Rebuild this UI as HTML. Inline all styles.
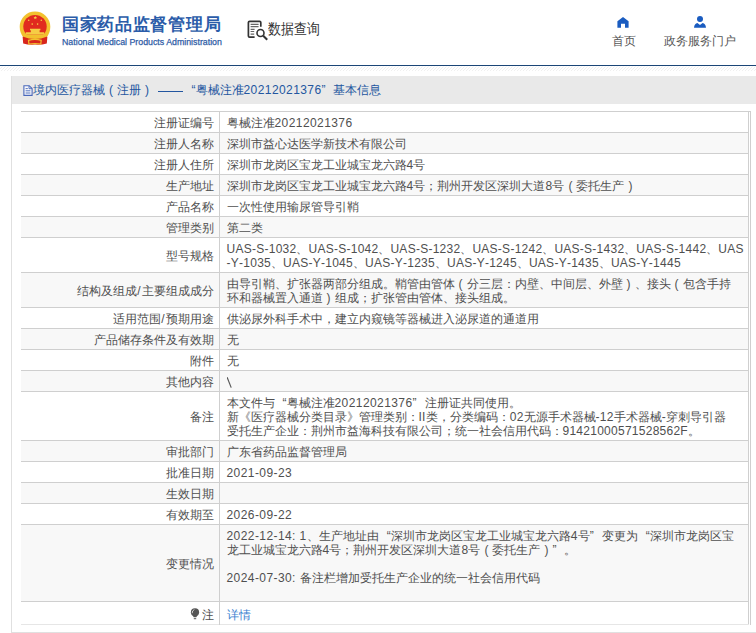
<!DOCTYPE html>
<html><head><meta charset="utf-8">
<style>
*{margin:0;padding:0;box-sizing:border-box}
html,body{width:756px;height:633px;overflow:hidden;background:#fff;font-family:"Liberation Sans",sans-serif;color:#333}
.a{position:absolute;white-space:nowrap}
.t1{left:62px;top:13px;font-size:17px;letter-spacing:0.7px;font-weight:900;color:#2b5ca9;line-height:24px}
.t2{left:62px;top:36.6px;font-size:8.8px;color:#2f5ca6;-webkit-text-stroke:0.25px #2f5ca6;line-height:10px}
.sqt{left:268px;top:19px;font-size:13px;color:#333;line-height:18px;transform:scaleY(1.16);transform-origin:0 0}
.nav{top:34px;font-size:12px;color:#555;line-height:14px}
.line{left:0;top:65px;width:756px;height:1px;background:#1b4677}
.hatch{left:0;top:66px;width:756px;height:6px;background:repeating-linear-gradient(135deg,#fff 0,#fff 2px,#ececec 2px,#ececec 3px)}
.box{left:11px;top:76px;width:760px;height:557px;border-left:1px solid #e0e0e0;border-bottom:1px solid #e0e0e0}
.bar{position:absolute;left:0;top:0;width:760px;height:28px;background:#e9e9e9}
.bart{position:absolute;left:0;top:6px;font-size:12px;color:#2356a0;line-height:16px;white-space:nowrap}
table{position:absolute;left:21px;top:111px;width:728px;border-collapse:collapse;border:1px solid #cfcfcf;border-left:none;border-bottom-color:#e6e6e6}
td{font-size:12px;line-height:14px;padding:4px 0 2px;border-top:1px solid #cfcfcf;white-space:nowrap;color:#4f4f4f}
td.l{width:198px;text-align:right;padding-right:5px;border-right:1px solid #cfcfcf}
td.v{padding-left:7px}
tr:nth-child(even) td{background:#f8f8f8}
tr.last td{padding-top:5px;padding-bottom:1px}
a{color:#3a7fd0;text-decoration:none}
.n{letter-spacing:0.26px;font-kerning:none}
.sl{margin:0 0.8px}
.d{letter-spacing:0.42px;font-kerning:none}
.pc{display:inline-block;width:12px;text-align:center}
.ql{display:inline-block;width:12px;text-align:right}
.qr{display:inline-block;width:12px;text-align:left}
</style></head><body>
<svg class="a" style="left:17px;top:8px" width="36" height="40" viewBox="17 8 36 40">
  <defs><clipPath id="ring"><circle cx="35" cy="26.9" r="15.3"/></clipPath></defs>
  <circle cx="35" cy="26.9" r="15.3" fill="#f2c12e"/>
  <circle cx="35" cy="26.6" r="11.7" fill="#e12a1f"/>
  <g clip-path="url(#ring)"><path d="M20 34.5H50V37.2Q35 40.2 20 37.2Z" fill="#f2c12e"/></g>
  <path d="M30 28.8h10.4v1.4h-10.4zM30.8 30.1h8.8v2.3h-8.8zM25.8 32.3h18.4v2.3h-18.4z" fill="#f6cd45"/>
  <path d="M35.3 15.9l0.55 1.1 1.2 0.15-0.9 0.85 0.25 1.2-1.1-0.6-1.1 0.6 0.25-1.2-0.9-0.85 1.2-0.15z" fill="#f6cd45"/>
  <circle cx="28.7" cy="20.3" r="0.8" fill="#f6cd45"/>
  <circle cx="41.3" cy="20.3" r="0.8" fill="#f6cd45"/>
  <circle cx="32.2" cy="24.1" r="0.8" fill="#f6cd45"/>
  <circle cx="37.6" cy="24.1" r="0.8" fill="#f6cd45"/>
  <path d="M22.6 36.5Q35 41.5 47.4 36.5L46.8 43.4Q41 45.2 35 44.6Q29 45.2 23.2 43.4Z" fill="#d8261c"/>
  <path d="M28.5 40.3Q35 38.6 41.2 40.3L40.8 44Q35 43.2 28.9 44Z" fill="none" stroke="#f2c12e" stroke-width="1.2"/>
  </svg>
<div class="a t1">国家药品监督管理局</div>
<div class="a t2">National Medical Products Administration</div>
<svg class="a" style="left:244px;top:16px" width="30" height="28" viewBox="0 0 30 28">
  <path d="M10.6 21.2H5.6Q4.4 21.2 4.4 20V6.5Q4.4 5.3 5.6 5.3H15.6Q16.8 5.3 16.8 6.5V10.8" fill="none" stroke="#333" stroke-width="1.7"/>
  <path d="M6.6 8.4H14.6M6.6 10.6H14.6M6.6 13.3H10.6M6.6 15.5H10.2M6.6 18.1H10.2" stroke="#666" stroke-width="1.2"/>
  <circle cx="16.5" cy="17" r="3.5" fill="#fff" stroke="#333" stroke-width="1.6"/>
  <path d="M19.2 19.7L23.2 23.8" stroke="#333" stroke-width="2"/>
</svg>
<div class="a sqt">数据查询</div>
<svg class="a" style="left:617px;top:17px" width="12" height="11" viewBox="0 0 12 11"><path d="M6 0L11.6 4.3V10.8H8V6.8H4V10.8H0.4V4.3Z" fill="#1a5cc0"/></svg>
<div class="a nav" style="left:612px">首页</div>
<svg class="a" style="left:694px;top:16px" width="12" height="12" viewBox="0 0 12 12"><circle cx="6" cy="3" r="3" fill="#1a5cc0"/><path d="M0 11.7Q0.4 7.6 3.4 7L6 9L8.6 7Q11.6 7.6 12 11.7Z" fill="#1a5cc0"/></svg>
<div class="a nav" style="left:664px">政务服务门户</div>
<div class="a line"></div>
<svg class="a" style="left:0;top:66px" width="756" height="6"><defs><pattern id="hp" width="3" height="3" patternUnits="userSpaceOnUse"><path d="M0 3L3 0" stroke="#eeeeee" stroke-width="0.9"/></pattern></defs><rect x="0" y="0.5" width="756" height="4.5" fill="url(#hp)"/></svg>
<div class="a box">
  <div class="bar">
    <svg style="position:absolute;left:11px;top:9px" width="10" height="11" viewBox="0 0 10 11"><path d="M0.9 0.7h5.3l2.9 2.9v6.8h-8.2z" fill="#f8f8fc" stroke="#4a68ba" stroke-width="1.1"/><path d="M6 0.9v2.8h2.9" fill="none" stroke="#4466b8" stroke-width="0.9"/><path d="M2.6 3.6h2.2M2.6 5.8h4.8M2.6 8h4.8" stroke="#4466b8" stroke-width="0.9"/></svg>
    <div class="bart" style="left:21px">境内医疗器械<span class="pc">(</span>注册<span class="pc">)</span></div>
    <div style="position:absolute;left:146px;top:15px;width:25px;height:1px;background:#2356a0"></div>
    <div class="bart" style="left:171.5px"><span class="ql">“</span>粤械注准<span class="d">20212021376</span><span class="qr">”</span></div>
    <div class="bart" style="left:320.5px">基本信息</div>
  </div>
</div>
<table>
<tr><td class="l">注册证编号</td><td class="v">粤械注准<span class="d">20212021376</span></td></tr>
<tr><td class="l">注册人名称</td><td class="v">深圳市益心达医学新技术有限公司</td></tr>
<tr><td class="l">注册人住所</td><td class="v">深圳市龙岗区宝龙工业城宝龙六路<span class="n">4</span>号</td></tr>
<tr><td class="l">生产地址</td><td class="v">深圳市龙岗区宝龙工业城宝龙六路<span class="n">4</span>号；荆州开发区深圳大道<span class="n">8</span>号<span class="pc">(</span>委托生产<span class="pc">)</span></td></tr>
<tr><td class="l">产品名称</td><td class="v">一次性使用输尿管导引鞘</td></tr>
<tr><td class="l">管理类别</td><td class="v">第二类</td></tr>
<tr><td class="l">型号规格</td><td class="v"><span class="n">UAS-S-1032</span>、<span class="n">UAS-S-1042</span>、<span class="n">UAS-S-1232</span>、<span class="n">UAS-S-1242</span>、<span class="n">UAS-S-1432</span>、<span class="n">UAS-S-1442</span>、<span class="n">UAS</span><br><span class="n">-Y-1035</span>、<span class="n">UAS-Y-1045</span>、<span class="n">UAS-Y-1235</span>、<span class="n">UAS-Y-1245</span>、<span class="n">UAS-Y-1435</span>、<span class="n">UAS-Y-1445</span></td></tr>
<tr><td class="l">结构及组成<span class="sl">/</span>主要组成成分</td><td class="v">由导引鞘、扩张器两部分组成。鞘管由管体<span class="pc">(</span>分三层：内壁、中间层、外壁<span class="pc">)</span>、接头<span class="pc">(</span>包含手持<br>环和器械置入通道<span class="pc">)</span>组成；扩张管由管体、接头组成。</td></tr>
<tr><td class="l">适用范围<span class="sl">/</span>预期用途</td><td class="v">供泌尿外科手术中，建立内窥镜等器械进入泌尿道的通道用</td></tr>
<tr><td class="l">产品储存条件及有效期</td><td class="v">无</td></tr>
<tr><td class="l">附件</td><td class="v">无</td></tr>
<tr><td class="l">其他内容</td><td class="v"><svg width="8" height="14" viewBox="0 0 8 14" style="vertical-align:-3px"><path d="M0.1 2.2L4.2 12.6" stroke="#555" stroke-width="1.15"/></svg></td></tr>
<tr><td class="l">备注</td><td class="v">本文件与<span class="ql">“</span>粤械注准<span class="d">20212021376</span><span class="qr">”</span>注册证共同使用。<br>新《医疗器械分类目录》管理类别：<span class="n">II</span>类，分类编码：<span class="n">02</span>无源手术器械<span class="n">-12</span>手术器械<span class="n">-</span>穿刺导引器<br>受托生产企业：荆州市益海科技有限公司；统一社会信用代码：<span class="n">91421000571528562F</span>。</td></tr>
<tr><td class="l">审批部门</td><td class="v">广东省药品监督管理局</td></tr>
<tr><td class="l">批准日期</td><td class="v"><span class="d">2021-09-23</span></td></tr>
<tr><td class="l">生效日期</td><td class="v"></td></tr>
<tr><td class="l">有效期至</td><td class="v"><span class="d">2026-09-22</span></td></tr>
<tr><td class="l" style="height:76px">变更情况</td><td class="v" style="vertical-align:top;padding-top:4px"><span class="d">2022-12-14: 1</span>、生产地址由<span class="ql">“</span>深圳市龙岗区宝龙工业城宝龙六路<span class="n">4</span>号<span class="qr">”</span>变更为<span class="ql">“</span>深圳市龙岗区宝<br>龙工业城宝龙六路<span class="n">4</span>号；荆州开发区深圳大道<span class="n">8</span>号<span class="pc">(</span>委托生产<span class="pc">)</span><span class="qr">”</span>。<br>&nbsp;<br><span class="d">2024-07-30: </span>备注栏增加受托生产企业的统一社会信用代码<br>&nbsp;</td></tr>
<tr class="last"><td class="l" style="height:23px"><svg width="10" height="12" viewBox="0 0 10 12" style="vertical-align:-1px;margin-right:2px"><circle cx="5" cy="4.3" r="4.1" fill="#555"/><path d="M2.6 7.2H7.4L6.3 9.2H3.7Z" fill="#555"/><rect x="3.8" y="10.2" width="2.4" height="1" fill="#555"/><path d="M2.2 5.2Q2 2.6 4.4 1.5" fill="none" stroke="#eee" stroke-width="0.8"/></svg>注</td><td class="v"><a>详情</a></td></tr>
</table>
<div class="a" style="left:748px;top:111px;width:3px;height:1px;background:#cfcfcf"></div>
<div class="a" style="left:750px;top:111px;width:1px;height:514px;background:#cfcfcf"></div>
</body></html>
